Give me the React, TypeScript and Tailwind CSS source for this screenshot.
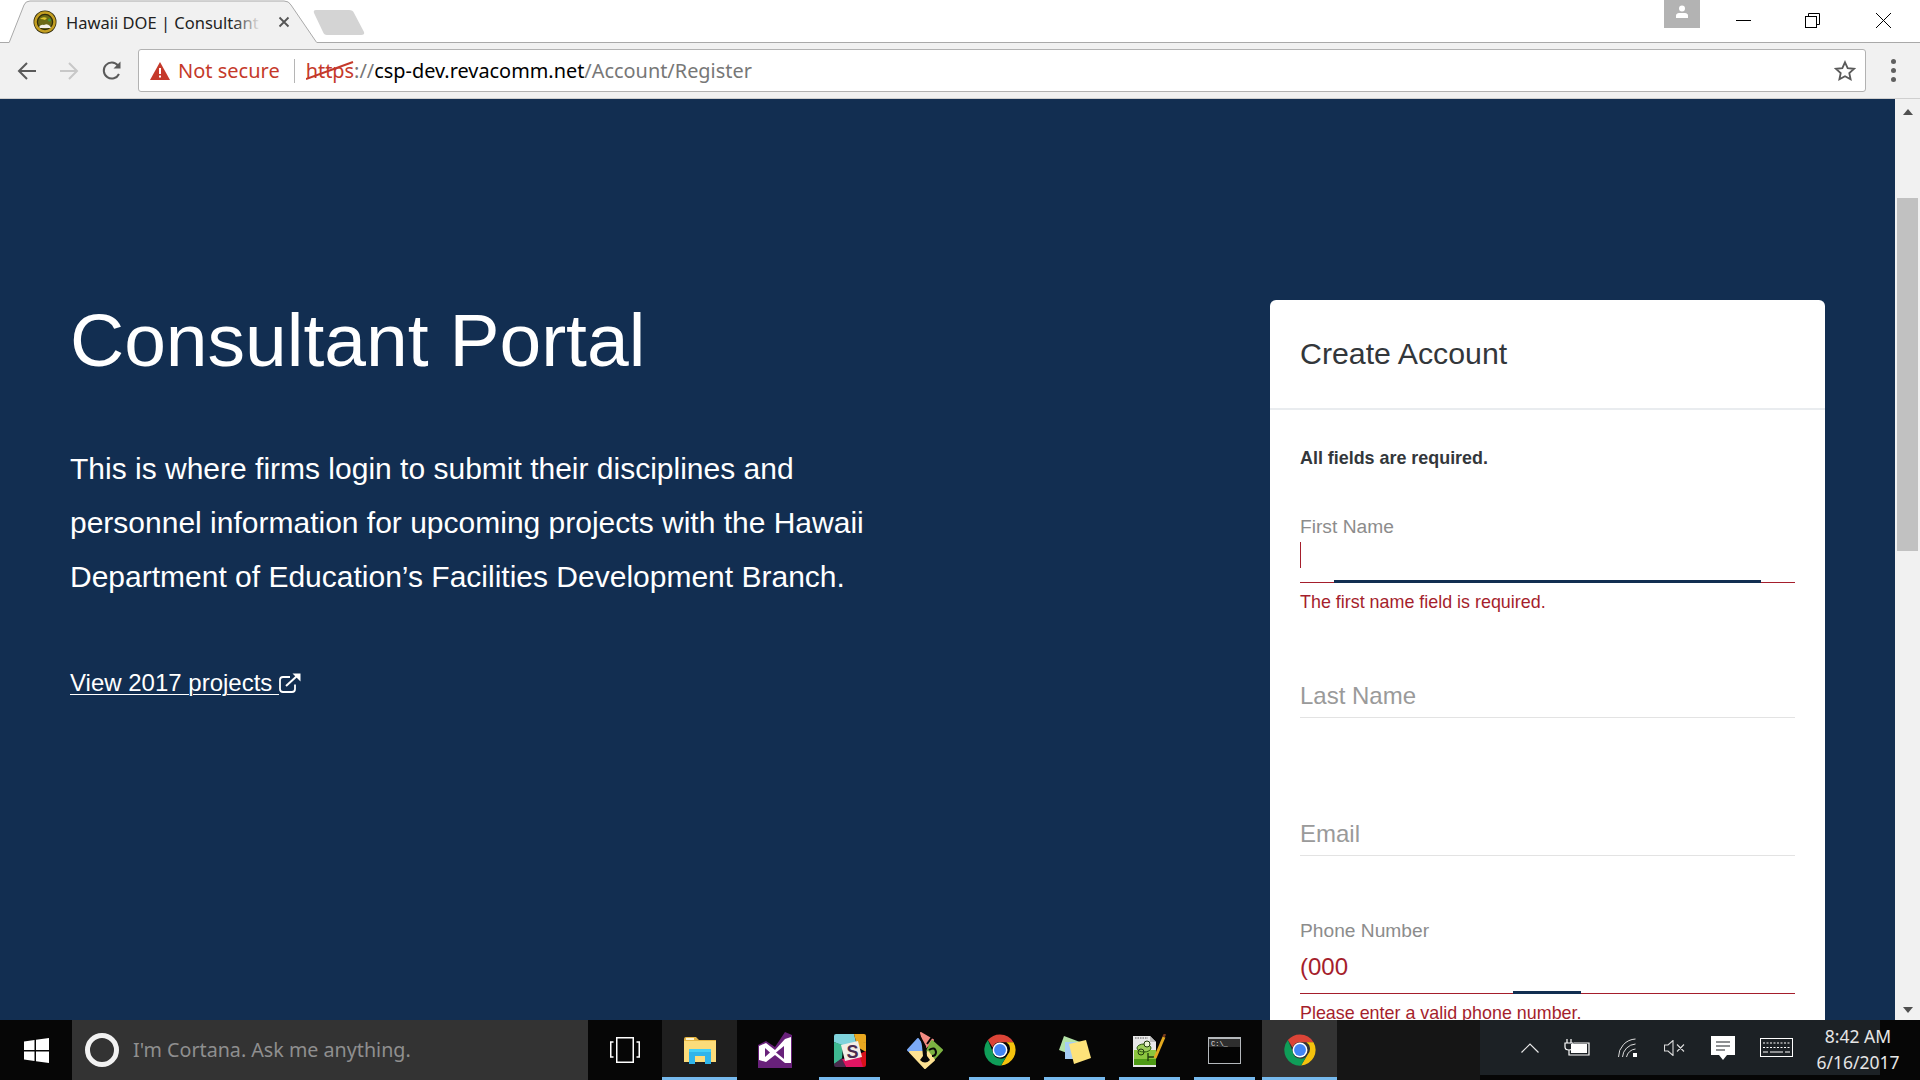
import React from "react";

const pageFont = "font-['Liberation_Sans',Arial,sans-serif]";
const uiFont = "font-['Noto_Sans','Open_Sans',sans-serif]";

const ChromeLogo = () => (
  <svg width="34" height="34" viewBox="0 0 48 48">
    <path d="M24 2a22 22 0 0 1 19.05 11H24a11 11 0 0 0-10.4 7.4L6.9 10A22 22 0 0 1 24 2z" fill="#db4437" />
    <path d="M43.05 13A22 22 0 0 1 25.5 46l9.9-16.5A11 11 0 0 0 33 13z" fill="#f4c20d" />
    <path d="M6.9 10a22 22 0 0 0 18.6 36l9.5-16.5A11 11 0 0 1 14 27z" fill="#0f9d58" />
    <circle cx="24" cy="24" r="10.5" fill="#fff" />
    <circle cx="24" cy="24" r="8.4" fill="#4285f4" />
  </svg>
);

const ExplorerIcon = () => (
  <svg width="32" height="27" viewBox="0 0 32 27">
    <path d="M0 2Q0 0 2 0H12L15 3H32V25H0z" fill="#e6b645" />
    <rect x="0" y="4" width="32" height="21" fill="#fcdc7a" />
    <rect x="2" y="1" width="8" height="2" fill="#fff6d0" />
    <path d="M5 13L16 8L28 13V25H22V17H11V25H5z" fill="#fcdc7a" />
    <path d="M5 14H27V27H21V19H11V27H5z" fill="#2fb5ea" />
    <path d="M5 12H27V15H5z" fill="#45d0f7" />
  </svg>
);

const VisualStudioIcon = () => (
  <svg width="34" height="36" viewBox="0 0 34 36">
    <path d="M0 13L8 9L17 15L27 0L34 3V36H0z" fill="#68217a" />
    <path d="M1 14L8 11L17 18L27 7L33 5V31L27 31L17 23L8 30L1 28z" fill="#fff" />
    <path d="M7 16V25L12 20.500z" fill="#68217a" />
    <path d="M18 20.500L26 14V27z" fill="#68217a" />
  </svg>
);

const SlackIcon = () => (
  <svg width="32" height="33" viewBox="0 0 32 33">
    <path d="M2 0H20L22 8L9 12L0 8V2Q0 0 2 0z" fill="#7fd3dc" />
    <path d="M20 0H30Q32 0 32 2V8L23 11z" fill="#e9a820" />
    <path d="M0 8L9 11L8 25L0 30z" fill="#3eb991" />
    <path d="M0 30L8 24L12 33H2Q0 33 0 31z" fill="#4a2c4f" />
    <path d="M8 25L26 22L30 33H12z" fill="#e01563" />
    <path d="M23 9L32 8V18L25 14z" fill="#e9a820" />
    <path d="M25 20L32 17V31Q32 33 30 33H29z" fill="#d8121a" />
    <path d="M7 11L24 7L28 23L11 27z" fill="#f3eee6" />
    <text x="12.500" y="24" fontSize="18" fontWeight="700" fill="#4a2c4f" fontFamily="Liberation Sans">S</text>
  </svg>
);

const GitKrakenIcon = () => (
  <svg width="36" height="37" viewBox="0 0 36 37">
    <g strokeLinejoin="round" strokeWidth="2">
      <path d="M14 1L26 8L18 16z" fill="#f28b82" stroke="#f28b82" />
      <path d="M11 7L18 17V19H2L1 18z" fill="#7baaf7" stroke="#7baaf7" />
      <path d="M25 9L35 18L26 28L20 19z" fill="#7cb342" stroke="#7cb342" />
      <path d="M3 20H16L18 25L21 20L27 28L18 36z" fill="#fde293" stroke="#fde293" />
    </g>
    <path d="M13 3L19 14L20 24L23 28Q18 33 13 28L16 24L15 14z" fill="#070707" />
    <path d="M22 18Q28 14 29 20Q29 24 25 24" fill="none" stroke="#070707" strokeWidth="2" />
    <path d="M25 5L20 12" stroke="#070707" strokeWidth="2" />
  </svg>
);

const StickyIcon = () => (
  <svg width="32" height="28" viewBox="0 0 32 28">
    <path d="M5 0L21 6L16 20L0 14z" fill="#b3e2a6" />
    <path d="M6 6H23V23H6z" fill="#a6cdf4" />
    <path d="M10 8L27 4L32 22L15 28z" fill="#fde27a" />
  </svg>
);

const NotepadIcon = () => (
  <svg width="33" height="33" viewBox="0 0 33 33">
    <path d="M0 2H17L23 8V33H0z" fill="#e8e8e8" />
    <path d="M17 2V8H23z" fill="#bdbdbd" />
    <path d="M2 4H15" stroke="#555" strokeDasharray="1.500 1" />
    <path d="M1 16H23V31H1z" fill="#8cc63f" />
    <path d="M1 25H23V31H1z" fill="#4e9a16" />
    <ellipse cx="11" cy="14" rx="7" ry="4" fill="#9ccc5a" stroke="#2c5a0e" />
    <circle cx="14" cy="10" r="3" fill="#e9f3d0" stroke="#203a0c" />
    <circle cx="8" cy="18" r="3" fill="none" stroke="#203a0c" />
    <path d="M15 19V27M15 23H21" stroke="#203a0c" strokeWidth="1.300" />
    <path d="M22 24L31 3" stroke="#e3a91f" strokeWidth="3" />
    <path d="M30.500 3L32 0" stroke="#7a3b1d" strokeWidth="2.500" />
  </svg>
);

const CmdIcon = () => (
  <svg width="33" height="27" viewBox="0 0 33 27">
    <rect x="0" y="0" width="33" height="27" fill="#b4b8bc" />
    <rect x="1" y="2" width="31" height="24" fill="#040404" />
    <rect x="1" y="2" width="31" height="8" fill="#2e2e2e" />
    <text x="3" y="9" fontSize="7" fill="#e0e0e0" fontFamily="Liberation Mono">C:\_</text>
  </svg>
);

const TaskbarCell = ({
  children,
  running,
  wide,
  bg,
}: {
  children: React.ReactNode;
  running?: boolean;
  wide?: boolean;
  bg?: string;
}) => (
  <div className={`relative flex h-full w-[75px] shrink-0 items-center justify-center ${bg ?? ""}`}>
    {children}
    {running && (
      <div className={`absolute bottom-0 h-[3px] bg-[#76b9ed] ${wide ? "inset-x-0" : "inset-x-[7px]"}`} />
    )}
  </div>
);

const Field = ({
  label,
  floating,
  value,
  error,
  focus,
  className,
}: {
  label: string;
  floating?: boolean;
  value?: string;
  error?: string;
  focus?: string;
  className?: string;
}) => (
  <div className={className}>
    {floating && <div className="h-[22px] text-[19.2px] leading-[22px] text-[#8c8c8c]">{label}</div>}
    <div
      className={`relative flex items-center border-b ${
        value ? "h-[52px] pb-[2px]" : focus ? "h-[45px]" : "h-[44px]"
      } ${error ? "border-[#a51e2c]" : "border-[#e3e3e3]"}`}
    >
      {!floating && <span className="text-[24px] leading-[28px] text-[#9a9a9a]">{label}</span>}
      {value && <span className="text-[24px] leading-[28px] text-[#a51e2c]">{value}</span>}
      {focus === "first" && <div className="mb-[10px] h-[26px] w-px bg-[#a51e2c]" />}
      {focus === "first" && <div className="absolute -bottom-px left-[34px] right-[34px] h-[3px] bg-[#122e51]" />}
      {focus === "phone" && <div className="absolute -bottom-px left-[213px] h-[3px] w-[68px] bg-[#122e51]" />}
    </div>
    {error && <div className="mt-[8px] text-[17.9px] leading-[22px] text-[#a51e2c]">{error}</div>}
  </div>
);

export default function App() {
  return (
    <div className={`flex h-screen w-screen flex-col overflow-hidden bg-white ${pageFont}`}>
      {/* tab strip */}
      <div className={`relative flex h-[43px] shrink-0 items-start border-b border-[#a9a9a9] bg-white ${uiFont}`}>
        <svg className="absolute left-0 top-0" width="330" height="43" viewBox="0 0 330 43">
          <path d="M9 43L24 5Q25.500 1 30 1H284Q289 1 291 5L317 43z" fill="#f1f1f1" stroke="#a9a9a9" />
          <path d="M9.500 42.500H316.500" stroke="#f1f1f1" />
        </svg>
        <svg className="absolute left-[313px] top-[10px]" width="52" height="26" viewBox="0 0 52 26">
          <path d="M3 0H36Q40 0 41 3L51 22Q52 25 48 25H14Q11 25 10 22L1 3Q0 0 3 0z" fill="#d4d4d4" />
        </svg>
        <svg className="absolute left-[33px] top-[10px]" width="24" height="24" viewBox="0 0 24 24">
          <circle cx="12" cy="12" r="11.500" fill="#2f2a0c" />
          <circle cx="12" cy="12" r="9.500" fill="none" stroke="#c49f22" strokeWidth="2.500" />
          <circle cx="12" cy="12" r="7" fill="#6a6a14" />
          <path d="M7 9q3-3 7-1l-2 2q-2-1-5-1z" fill="#e2c72e" />
          <circle cx="16.500" cy="10" r="1.500" fill="#3f9a3d" />
          <path d="M6 17q2-3 5-2 3-2 6 1l1 2H7z" fill="#f2f1e6" />
        </svg>
        <div className="absolute left-[66px] top-[10px] w-[195px] overflow-hidden whitespace-nowrap text-[16.5px] leading-[25px] text-[#222]">
          Hawaii DOE | Consultant
          <div className="absolute inset-y-0 right-0 w-[28px] bg-gradient-to-r from-transparent to-[#f1f1f1]" />
        </div>
        <svg className="absolute left-[278px] top-[16px]" width="12" height="12" viewBox="0 0 12 12">
          <path d="M1.500 1.500L10.500 10.500M10.500 1.500L1.500 10.500" stroke="#555" strokeWidth="1.800" />
        </svg>
        <div className="ml-auto flex items-start">
          <div className="flex h-[28px] w-[36px] items-start justify-center bg-[#b3b3b3] pt-[5px]">
            <svg width="14" height="14" viewBox="0 0 14 14">
              <circle cx="7" cy="3.500" r="3" fill="#fff" />
              <path d="M1 13V10.500Q1 8.500 4 8H10Q13 8.500 13 10.500V13z" fill="#fff" />
            </svg>
          </div>
          <div className="ml-[36px] flex h-[28px] w-[15px] items-center pt-[12px]">
            <div className="h-px w-[15px] bg-black" />
          </div>
          <svg className="ml-[54px] mt-[13px]" width="15" height="15" viewBox="0 0 15 15" fill="none" stroke="#000">
            <rect x="0.500" y="3.500" width="11" height="11" />
            <path d="M3.500 3.500V0.500H14.500V11.500H11.500" />
          </svg>
          <svg className="ml-[56px] mr-[29px] mt-[13px]" width="15" height="15" viewBox="0 0 15 15" stroke="#000">
            <path d="M0 0L15 15M15 0L0 15" />
          </svg>
        </div>
      </div>

      {/* toolbar */}
      <div className={`flex h-[56px] shrink-0 items-center border-b border-[#cfcfcf] bg-[#f1f1f1] ${uiFont}`}>
        <div className="flex w-[138px] shrink-0 items-center pl-[17px]">
          <svg width="20" height="20" viewBox="0 0 20 20" fill="none" stroke="#5a5a5a" strokeWidth="2">
            <path d="M19 10H2M10 2L2 10L10 18" />
          </svg>
          <svg className="ml-[22px]" width="20" height="20" viewBox="0 0 20 20" fill="none" stroke="#c8c8c8" strokeWidth="2">
            <path d="M1 10H18M10 2L18 10L10 18" />
          </svg>
          <svg className="ml-[22px]" width="22" height="22" viewBox="0 0 22 22" fill="none" stroke="#5a5a5a" strokeWidth="2">
            <path d="M18 14A8 8 0 1 1 17 5.500" />
            <path d="M19.500 1.500V8.500H12.500z" fill="#5a5a5a" stroke="none" />
          </svg>
        </div>
        <div className="flex h-[43px] w-[1728px] shrink-0 items-center rounded-[3px] border border-[#b2b2b2] bg-white">
          <svg className="ml-[11px]" width="20" height="18" viewBox="0 0 20 18">
            <path d="M10 0L20 18H0z" fill="#c5392a" />
            <path d="M9 6h2v6H9zM9 13.500h2v2H9z" fill="#fff" />
          </svg>
          <span className="ml-[8px] text-[20px] leading-[26px] text-[#c5392a]">Not secure</span>
          <div className="ml-[14px] h-[24px] w-px bg-[#b5b5b5]" />
          <div className="relative ml-[11px] whitespace-nowrap text-[19.9px] leading-[26px] text-[#777]">
            <span className="text-[#c5392a]">https</span>
            <span>://</span>
            <span className="text-black">csp-dev.revacomm.net</span>
            <span>/Account/Register</span>
            <svg className="absolute left-0 top-[3px]" width="48" height="20" viewBox="0 0 48 20">
              <path d="M0 18L47 1" stroke="#c5392a" strokeWidth="2" />
            </svg>
          </div>
          <svg className="ml-auto mr-[9px]" width="22" height="22" viewBox="0 0 24 24" fill="none" stroke="#5a5a5a" strokeWidth="2">
            <path d="M12 2.500l2.900 6.300 6.900.8-5.100 4.700 1.400 6.800-6.100-3.400-6.100 3.400 1.400-6.800-5.100-4.700 6.900-.8z" />
          </svg>
        </div>
        <div className="flex flex-1 flex-col items-center gap-[4px] pr-[1px] pl-[2px]">
          <div className="h-[5px] w-[5px] rounded-full bg-[#5f5f5f]" />
          <div className="h-[5px] w-[5px] rounded-full bg-[#5f5f5f]" />
          <div className="h-[5px] w-[5px] rounded-full bg-[#5f5f5f]" />
        </div>
      </div>

      {/* page */}
      <div className="flex h-[921px] shrink-0 overflow-hidden">
        <main className="flex flex-1 overflow-hidden bg-[#122e51]">
          <div className="w-[1270px] shrink-0 pl-[70px] pt-[196px] text-white">
            <h1 className="text-[75px] leading-[90px]">Consultant Portal</h1>
            <p className="mt-[57px] w-[860px] text-[30px] leading-[54px]">
              This is where firms login to submit their disciplines and personnel information for upcoming projects
              with the Hawaii Department of Education’s Facilities Development Branch.
            </p>
            <a className="mt-[64px] flex items-center text-[24px] leading-[30px]">
              <span className="underline decoration-1 underline-offset-[3px]">View 2017 projects&nbsp;</span>
              <svg width="22" height="20" viewBox="0 0 22 20" fill="none" stroke="#fff" strokeWidth="1.800">
                <path d="M16 11.500V16Q16 19 13 19H4Q1 19 1 16V7Q1 4 4 4H11" />
                <path d="M7 13L18 3" strokeWidth="2" />
                <path d="M13.500 0.500H21.500V8.500z" fill="#fff" stroke="none" />
              </svg>
            </a>
          </div>
          <div className="mt-[201px] h-[800px] w-[555px] shrink-0 rounded-[6px] bg-white">
            <div className="flex h-[110px] items-center border-b-2 border-[#e9ecef] px-[30px] text-[30.3px] leading-[36px] text-[#33373b]">
              Create Account
            </div>
            <div className="px-[30px]">
              <div className="pt-[35px] text-[17.9px] font-bold leading-[27px] text-[#33373b]">
                All fields are required.
              </div>
              <Field className="mt-[44px]" label="First Name" floating error="The first name field is required." focus="first" />
              <Field className="mt-[61px]" label="Last Name" />
              <Field className="mt-[94px]" label="Email" />
              <Field className="mt-[64px]" label="Phone Number" floating value="(000" error="Please enter a valid phone number." focus="phone" />
            </div>
          </div>
        </main>
        <div className="flex w-[25px] shrink-0 flex-col items-center bg-[#f1f1f1]">
          <div className="mt-[10px] h-0 w-0 border-x-[5.5px] border-b-[6px] border-x-transparent border-b-[#505050]" />
          <div className="mt-[83px] h-[353px] w-[21px] bg-[#c1c1c1]" />
          <div className="mt-auto mb-[7px] h-0 w-0 border-x-[5.5px] border-t-[6px] border-x-transparent border-t-[#505050]" />
        </div>
      </div>

      {/* taskbar */}
      <div className={`flex h-[60px] shrink-0 bg-[#060606] ${uiFont}`}>
        <div className="flex w-[72px] shrink-0 items-center justify-center">
          <svg width="25" height="25" viewBox="0 0 25 25" fill="#fff">
            <path d="M0 3.500L10.500 2V12H0zM12 1.800L25 0V12H12zM0 13.500H10.500V23L0 21.500zM12 13.500H25V25L12 23.200z" />
          </svg>
        </div>
        <div className="flex h-full w-[516px] shrink-0 items-center bg-[#333333] pl-[13px]">
          <div className="h-[34px] w-[34px] rounded-full border-[5px] border-[#f2f2f2]" />
          <span className="ml-[14px] text-[19.7px] leading-[26px] text-[#8f8f8f]">I'm Cortana. Ask me anything.</span>
        </div>
        <div className="flex w-[74px] shrink-0 items-center justify-center">
          <svg width="30" height="26" viewBox="0 0 30 26" fill="none" stroke="#fff" strokeWidth="1.500">
            <rect x="6.750" y="0.750" width="16.500" height="24.500" />
            <path d="M3.500 5H0.750V20H3.500M26.500 5H29.250V20H26.500" />
          </svg>
        </div>
        <TaskbarCell running wide bg="bg-[#1f1f1f]"><ExplorerIcon /></TaskbarCell>
        <TaskbarCell><VisualStudioIcon /></TaskbarCell>
        <TaskbarCell running><SlackIcon /></TaskbarCell>
        <TaskbarCell><GitKrakenIcon /></TaskbarCell>
        <TaskbarCell running><ChromeLogo /></TaskbarCell>
        <TaskbarCell running><StickyIcon /></TaskbarCell>
        <TaskbarCell running><NotepadIcon /></TaskbarCell>
        <TaskbarCell running><CmdIcon /></TaskbarCell>
        <TaskbarCell running wide bg="bg-[#333333]"><ChromeLogo /></TaskbarCell>
        <div className="w-[143px] shrink-0 bg-[#151515]" />
        <div className="flex h-[55px] w-[400px] shrink-0 items-center bg-[#1c2125] pl-[41px] text-white">
          <svg className="shrink-0" width="18" height="10" viewBox="0 0 18 10" fill="none" stroke="#e8e8e8" strokeWidth="1.200">
            <path d="M0.500 9.500L9 1L17.500 9.500" />
          </svg>
          <svg className="ml-[25px] shrink-0" width="26" height="17" viewBox="0 0 26 17" fill="none" stroke="#fff" strokeWidth="1.200">
            <path d="M3 0V4M7 0V4M1 4H9V8Q9 11 5 11Q1 11 1 8zM5 11V16H25V4H10" />
            <rect x="7" y="5" width="16" height="9" fill="#fff" stroke="none" />
          </svg>
          <svg className="ml-[28px] shrink-0" width="20" height="20" viewBox="0 0 20 20" fill="none" stroke="#dcdcdc" strokeWidth="1">
            <path d="M0.500 19A18 18 0 0 1 17.500 1M4.500 19A14 14 0 0 1 17.500 6M8.500 19A10 10 0 0 1 17.500 11" />
            <rect x="15" y="15" width="4" height="4" fill="#fff" stroke="none" />
          </svg>
          <svg className="ml-[26px] shrink-0" width="21" height="16" viewBox="0 0 21 16" fill="none" stroke="#dcdcdc" strokeWidth="1.100">
            <path d="M0.500 5H4L9 0.500V15.500L4 11H0.500zM13 4.500L20 11.500M20 4.500L13 11.500" />
          </svg>
          <svg className="ml-[26px] shrink-0" width="24" height="24" viewBox="0 0 24 24">
            <path d="M0 0H24V19H16L12 24L8 19H0z" fill="#fff" />
            <path d="M5 6H19M5 10H19M5 14H14" stroke="#1c2125" strokeWidth="1.200" />
          </svg>
          <svg className="ml-[25px] shrink-0" width="33" height="19" viewBox="0 0 33 19" fill="none" stroke="#fff" strokeWidth="1">
            <rect x="0.500" y="0.500" width="32" height="18" />
            <path d="M3 5H30M3 9.500H30" strokeDasharray="2 1.500" />
            <path d="M3 14H8M10 14H23M25 14H30" />
          </svg>
          <div className="ml-[20px] w-[90px] shrink-0 pt-[3px] text-center text-[17.5px] leading-[26px] text-[#e6e6e6]">
            <div>8:42 AM</div>
            <div>6/16/2017</div>
          </div>
        </div>
        <div className="flex-1" />
      </div>
    </div>
  );
}
